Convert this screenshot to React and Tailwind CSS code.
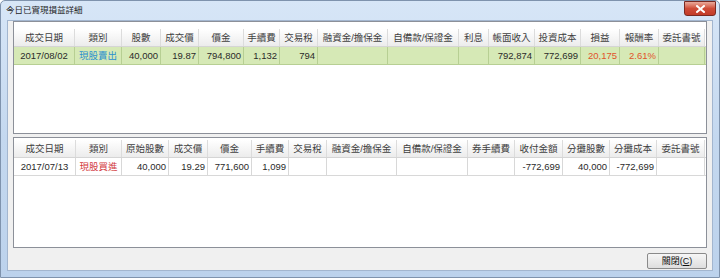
import React from "react";

const topCols = [
  { h: "成交日期", w: "w-[61px]", v: "2017/08/02", a: "text-center" },
  { h: "類別", w: "w-[47px]", v: "現股賣出", a: "text-center", c: "text-[#2b8fcf]" },
  { h: "股數", w: "w-[39px]", v: "40,000" },
  { h: "成交價", w: "w-[38px]", v: "19.87" },
  { h: "價金", w: "w-[45px]", v: "794,800" },
  { h: "手續費", w: "w-[36px]", v: "1,132" },
  { h: "交易稅", w: "w-[38px]", v: "794" },
  { h: "融資金/擔保金", w: "w-[70px]", v: "" },
  { h: "自備款/保證金", w: "w-[71px]", v: "" },
  { h: "利息", w: "w-[30px]", v: "" },
  { h: "帳面收入", w: "w-[46px]", v: "792,874" },
  { h: "投資成本", w: "w-[46px]", v: "772,699" },
  { h: "損益", w: "w-[39px]", v: "20,175", c: "text-[#e0532b]" },
  { h: "報酬率", w: "w-[39px]", v: "2.61%", c: "text-[#e0532b]" },
  { h: "委託書號", w: "w-[46px]", v: "" },
];

const botCols = [
  { h: "成交日期", w: "w-[62px]", v: "2017/07/13", a: "text-center" },
  { h: "類別", w: "w-[46px]", v: "現股買進", a: "text-center", c: "text-[#d2383d]" },
  { h: "原始股數", w: "w-[47px]", v: "40,000" },
  { h: "成交價", w: "w-[39px]", v: "19.29" },
  { h: "價金", w: "w-[44px]", v: "771,600" },
  { h: "手續費", w: "w-[37px]", v: "1,099" },
  { h: "交易稅", w: "w-[38px]", v: "" },
  { h: "融資金/擔保金", w: "w-[70px]", v: "" },
  { h: "自備款/保證金", w: "w-[71px]", v: "" },
  { h: "券手續費", w: "w-[47px]", v: "" },
  { h: "收付金額", w: "w-[48px]", v: "-772,699" },
  { h: "分攤股數", w: "w-[47px]", v: "40,000" },
  { h: "分攤成本", w: "w-[47px]", v: "-772,699" },
  { h: "委託書號", w: "w-[48px]", v: "" },
];

const font = { fontFamily: '"Liberation Sans", "Noto Sans CJK TC", sans-serif' };

function Grid({ cols, green }) {
  return (
    <div className="flex flex-col">
      <div className="flex h-[18px] border-b border-[#d5d5d5]">
        {cols.map((c, i) => (
          <div
            key={i}
            className={`${c.w} shrink-0 border-r border-[#dcdcdc] bg-gradient-to-b from-[#ffffff] to-[#ececec] text-center text-[9.5px] leading-[17px] text-[#404040] whitespace-nowrap overflow-hidden`}
          >
            {c.h}
          </div>
        ))}
      </div>
      <div className={`flex h-[18px] ${green ? "bg-[#d6e9b6] border-b border-[#b7cf93]" : "bg-white border-b border-[#d8d8d8]"}`}>
        {cols.map((c, i) => (
          <div
            key={i}
            className={`${c.w} shrink-0 border-r ${green ? "border-[#b7cf93]" : "border-[#d8d8d8]"} ${c.a || "text-right pr-[2px]"} ${c.c || "text-[#2a2a2a]"} text-[9.5px] leading-[17px] whitespace-nowrap overflow-hidden`}
          >
            {c.v}
          </div>
        ))}
      </div>
    </div>
  );
}

export default function App() {
  return (
    <div
      className="w-[720px] h-[278px] bg-gradient-to-b from-[#d7e6f7] via-[#c4d8ef] to-[#bcd2ec] border border-[#7f93ad] rounded-t-[5px] flex flex-col overflow-hidden"
      style={font}
    >
      <div className="h-[19px] flex items-center justify-between shrink-0">
        <div className="pl-[5px] text-[8.5px] text-[#1e1e1e]">今日已實現損益詳細</div>
        <div className="mr-[3px] mb-[4px] w-[32px] h-[15px] rounded-b-[3px] border border-[#7a2a22] bg-gradient-to-b from-[#e9a99b] via-[#cf4c38] to-[#c23b28] flex items-center justify-center">
          <svg width="9" height="8" viewBox="0 0 9 8">
            <path d="M1 1 L8 7 M8 1 L1 7" stroke="#ffffff" strokeWidth="2" strokeLinecap="square" />
          </svg>
        </div>
      </div>
      <div className="flex-1 mx-[6px] mb-[6px] border border-[#a3b6cf] bg-[#f0f0f0] flex flex-col px-[5px]">
        <div className="h-[113px] border border-[#8c9099] bg-white shrink-0 pt-[7px]">
          <Grid cols={topCols} green />
        </div>
        <div className="mt-[3px] h-[111px] border border-[#8c9099] bg-white shrink-0 pt-[2px]">
          <Grid cols={botCols} />
        </div>
        <div className="flex justify-end mt-[5px]">
          <button className="w-[60px] h-[16px] border border-[#8a8a8a] rounded-[2px] bg-gradient-to-b from-[#f6f6f6] to-[#dedede] text-[9px] leading-[14px] text-[#111]">
            關閉(<span className="underline">C</span>)
          </button>
        </div>
      </div>
    </div>
  );
}
